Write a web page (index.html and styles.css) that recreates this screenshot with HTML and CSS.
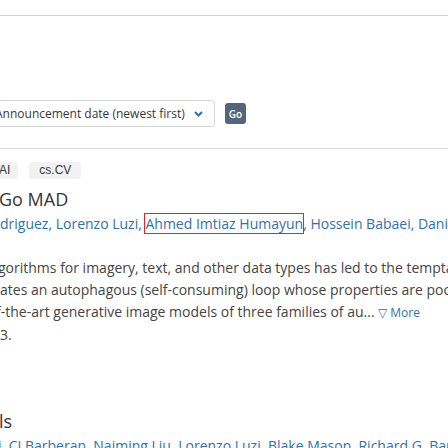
FILE: index.html
```html
<!DOCTYPE html>
<html lang="en">
<head>
<meta charset="utf-8">
<title>Search results</title>
<link rel="stylesheet" href="styles.css">
</head>
<body>
<div class="topbar"></div>
<form class="sortbar">
  <div class="select">
    <span class="select-text">Announcement date (newest first)</span>
    <svg class="chev" width="9" height="6" viewBox="0 0 9 6"><path d="M1 1 L4.5 4.5 L8 1" fill="none" stroke="#2f6fb5" stroke-width="2"/></svg>
  </div>
  <button class="go" type="button">Go</button>
</form>
<div class="sep"></div>
<ol class="results">
  <li class="result">
    <div class="tags"><span class="tag tag-clip">AI</span><span class="tag">cs.CV</span></div>
    <p class="title title-clip">Go MAD</p>
    <p class="authors">driguez, Lorenzo Luzi, <span class="hl">Ahmed Imtiaz Humayun</span>, Hossein Babaei, Daniel LeJeune</p>
    <p class="abstract">
      <span class="line line-a">gorithms for imagery, text, and other data types has led to the temptation</span>
      <span class="line line-b">ates an autophagous (self-consuming) loop whose properties are poorly</span>
      <span class="line line-c">f-the-art generative image models of three families of au... <a class="more" href="#">&#9661; More</a></span>
      <span class="line line-d">3.</span>
    </p>
  </li>
  <li class="result result-next">
    <p class="title title-clip2">ls</p>
    <p class="authors authors-clip">i, CJ Barberan, Naiming Liu, Lorenzo Luzi, Blake Mason, Richard G. Baraniuk</p>
  </li>
</ol>
</body>
</html>
```
FILE: styles.css
```css
html, body {
  margin: 0;
  padding: 0;
}
body {
  width: 448px;
  height: 448px;
  overflow: hidden;
  background: #ffffff;
  font-family: "Open Sans", "Noto Sans", sans-serif;
  color: #444444;
}
.topbar {
  height: 15px;
  border-bottom: 1px solid #d2d2d2;
}
.sortbar {
  display: flex;
  align-items: center;
  gap: 10px;
  margin: 84px 0 0 0;
}
.select {
  box-sizing: border-box;
  flex: 0 0 245px;
  margin-left: -30px;
  height: 27px;
  border: 1px solid #d6d6d6;
  border-radius: 4px;
  display: flex;
  align-items: center;
  padding-left: 24px;
  padding-right: 11px;
}
.select-text {
  font-size: 12px;
  color: #363636;
  white-space: nowrap;
}
.chev {
  margin-left: auto;
}
.go {
  flex: 0 0 21px;
  height: 21px;
  padding: 0;
  border: none;
  border-radius: 3px;
  background: #56667a;
  color: #ffffff;
  font-family: "Open Sans", sans-serif;
  font-size: 10px;
  font-weight: 600;
}
.sep {
  margin-top: 21px;
  border-top: 1px solid #dcdcdc;
}
.results {
  list-style: none;
  margin: 0;
  padding: 0;
}
.tags {
  display: flex;
  gap: 11px;
  margin-top: 13px;
}
.tag {
  box-sizing: border-box;
  height: 17px;
  padding: 0 10px;
  border-radius: 3px;
  background: #f2f2f2;
  color: #363636;
  font-family: "Liberation Sans", Arial, sans-serif;
  font-size: 12px;
  line-height: 17px;
  white-space: nowrap;
}
.tag-clip {
  margin-left: -11px;
  padding-right: 8px;
}
.title {
  margin: 8px 0 0 0;
  font-size: 18px;
  line-height: 24px;
  color: #363636;
  white-space: nowrap;
}
.title-clip {
  margin-left: -1px;
}
.authors {
  margin: 2px 0 0 0;
  font-size: 14px;
  line-height: 21px;
  color: #2f6fb5;
  white-space: nowrap;
}
.hl {
  outline: 1px solid #ff1a1a;
  outline-offset: 0;
}
.abstract {
  margin: 23px 0 0 0;
  font-size: 14px;
  line-height: 22px;
  color: #444444;
}
.line {
  display: block;
  white-space: nowrap;
}
.line-a {
  margin-left: -2px;
}
.line-c {
  margin-left: -4px;
}
.more {
  color: #2f6fb5;
  text-decoration: none;
  font-size: 12px;
}
.result-next {
  margin-top: 63px;
}
.title-clip2 {
  margin-left: -1px;
}
.authors-clip {
  margin-left: -2px;
}
```
